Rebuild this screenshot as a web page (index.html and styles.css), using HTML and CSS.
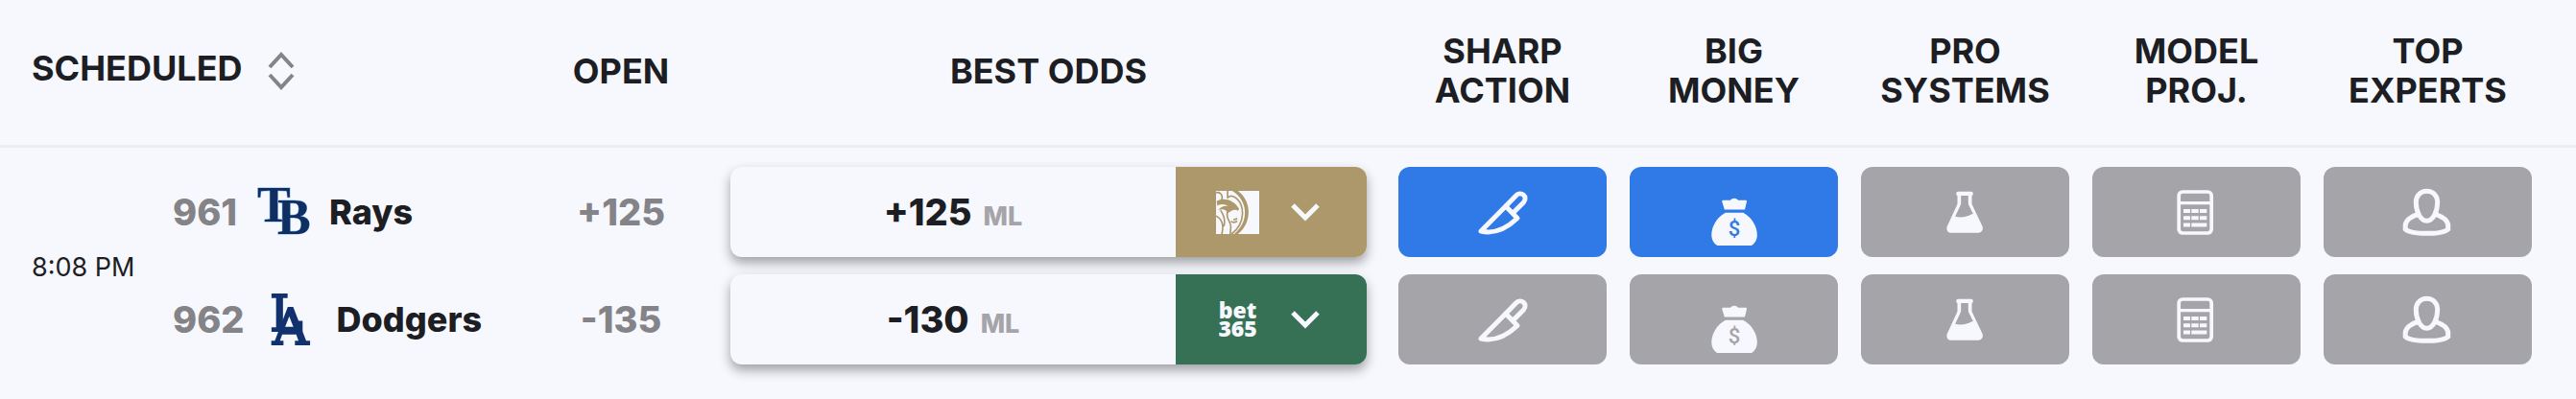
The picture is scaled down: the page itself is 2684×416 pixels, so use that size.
FILE: index.html
```html
<!DOCTYPE html>
<html lang="en">
<head>
    <meta charset="UTF-8">
    <meta name="viewport" content="width=device-width, initial-scale=1.0">
    <title>MLB Odds</title>
    <link rel="stylesheet" href="styles.css">
</head>
<body>
    <!-- icon set shared by both rows -->
    <svg class="sprite" aria-hidden="true">
        <symbol id="knife" viewBox="0 0 56 72">
            <g fill="none" stroke="currentColor" stroke-width="5" stroke-linejoin="round" stroke-linecap="round">
                <path d="M30.8 30L41.5 19C46.5 13.5 54.5 20 49.5 26L39 36.5"/>
                <path d="M30.8 30L43 42.5C31 54 18 59 5 56Z"/>
            </g>
        </symbol>
        <symbol id="money" viewBox="0 0 56 72">
            <path fill="currentColor" d="M16.5 23.7H24C25.5 21 30.5 21 32 23.7H39.8Q41.3 23.7 41 25L39 33.5H17.8L15.2 25Q15.2 23.7 16.5 23.7Z"/>
            <path fill="currentColor" d="M18.7 36.7H37.3C47 42 52 52 51.8 60C52 65 49 69 46 71H10.3C7 69 4.3 65 4.3 60C4.3 52 9 42 18.7 36.7Z"/>
            <text class="dollar" x="28" y="61" text-anchor="middle">$</text>
        </symbol>
        <symbol id="flask" viewBox="0 0 56 72">
            <path fill="currentColor" fill-rule="evenodd" d="M20 14.7H34C36.3 14.7 36.3 19 34.5 19V27.7L45.3 50.5C47 54 45 57.7 41.5 57.7H12.7C9.2 57.7 7.3 54 9 50.5L19.5 27.7V19C17.7 19 17.7 14.7 20 14.7ZM23.2 19V27.7L17.2 40.7C27 43 32 39 35.8 38L30.8 27.7V19Z"/>
        </symbol>
        <symbol id="calculator" viewBox="0 0 56 72">
            <rect x="9.2" y="15" width="34" height="43" rx="4" fill="none" stroke="currentColor" stroke-width="3.7"/>
            <path fill="none" stroke="currentColor" stroke-width="3.3" d="M9 26.7H43"/>
            <path fill="none" stroke="currentColor" stroke-width="4" d="M14 35H21M22.3 35H29.7M31 35H38.3M14 42.3H21M22.3 42.3H29.7M31 42.3H38.3M14 49.5H21M22.3 49.5H38.3"/>
        </symbol>
        <symbol id="expert" viewBox="0 0 56 72">
            <g fill="none" stroke="currentColor" stroke-width="5">
                <path d="M26.5 14.2C33 14.2 37.7 19 37.7 25.5C37.7 35 33.5 45.2 26.5 45.2C19.5 45.2 15.3 35 15.3 25.5C15.3 19 20 14.2 26.5 14.2Z"/>
                <path d="M17.5 38.5C10 40.5 4.2 45 4.2 50V54C10 59.8 43 59.8 48.7 54V50C48.7 45 43 40.5 35.5 38.5"/>
            </g>
        </symbol>
        <symbol id="chevron" viewBox="0 0 30 20">
            <path fill="none" stroke="currentColor" stroke-width="5" d="M2 3L15 16L28 3"/>
        </symbol>
    </svg>

    <table class="odds-table">
        <colgroup>
            <col class="col-time">
            <col class="col-team">
            <col class="col-open">
            <col class="col-best">
            <col class="col-signal" span="5">
            <col class="col-end">
        </colgroup>
        <thead>
            <tr>
                <th class="scheduled" colspan="2">
                    <button class="sort" type="button">
                        <span class="sort-label">SCHEDULED</span>
                        <svg class="sort-icon" viewBox="0 0 28 40" aria-hidden="true">
                            <path fill="none" stroke="currentColor" stroke-width="4" d="M2 16L14 3L26 16M2 24L14 37L26 24"/>
                        </svg>
                    </button>
                </th>
                <th>OPEN</th>
                <th>BEST ODDS</th>
                <th>SHARP<br>ACTION</th>
                <th>BIG<br>MONEY</th>
                <th>PRO<br>SYSTEMS</th>
                <th>MODEL<br>PROJ.</th>
                <th>TOP<br>EXPERTS</th>
                <th></th>
            </tr>
        </thead>
        <tbody>
            <tr class="away">
                <td class="time" rowspan="2">8:08 PM</td>
                <td>
                    <div class="team">
                        <span class="rotation">961</span>
                        <svg class="team-logo" viewBox="0 0 58 56" aria-hidden="true">
                            <g class="rays">
                                <text x="1" y="38">T</text>
                                <text x="22" y="51">B</text>
                            </g>
                        </svg>
                        <span class="team-name">Rays</span>
                    </div>
                </td>
                <td class="open">+125</td>
                <td>
                    <div class="best">
                        <button class="quote" type="button">+125<span class="market">ML</span></button>
                        <button class="book mgm" type="button" aria-label="BetMGM">
                            <svg class="book-logo" viewBox="0 0 134 134" aria-hidden="true">
                                <path fill="currentColor" d="M0 0H134V134H0Z"/>
                                <g fill="none" stroke="#ad986c" stroke-width="5">
                                    <path d="M36 0V24M0 6C14 2 24 14 16 32"/>
                                    <path d="M38 20C50 6 84 30 82 72C81 98 66 120 48 134"/>
                                    <path d="M0 78C16 84 26 104 18 134M14 60C26 78 30 92 24 110M36 66C28 84 46 94 46 112L44 134"/>
                                    <path d="M46 94C52 99 60 98 66 94M54 90L66 86"/>
                                </g>
                                <path fill="#ad986c" d="M50 0H68C112 32 112 100 68 134H56C104 96 100 30 50 0Z"/>
                                <path fill="#ad986c" d="M2 32C20 20 54 24 72 56L68 62C60 54 44 62 36 70C34 58 18 54 6 60C14 50 24 46 38 46C26 40 14 40 4 46Z"/>
                            </svg>
                            <svg class="chevron"><use href="#chevron"/></svg>
                        </button>
                    </div>
                </td>
                <td><button class="signal active" type="button" aria-label="Sharp action"><svg><use href="#knife"/></svg></button></td>
                <td><button class="signal active" type="button" aria-label="Big money"><svg><use href="#money"/></svg></button></td>
                <td><button class="signal" type="button" aria-label="Pro systems"><svg><use href="#flask"/></svg></button></td>
                <td><button class="signal" type="button" aria-label="Model projection"><svg><use href="#calculator"/></svg></button></td>
                <td><button class="signal" type="button" aria-label="Top experts"><svg><use href="#expert"/></svg></button></td>
                <td></td>
            </tr>
            <tr class="home">
                <td>
                    <div class="team">
                        <span class="rotation">962</span>
                        <svg class="team-logo" viewBox="0 0 58 56" aria-hidden="true">
                            <g class="dodgers">
                                <text x="6" y="40">L</text>
                                <text x="9" y="54">A</text>
                            </g>
                        </svg>
                        <span class="team-name">Dodgers</span>
                    </div>
                </td>
                <td class="open">-135</td>
                <td>
                    <div class="best">
                        <button class="quote" type="button">-130<span class="market">ML</span></button>
                        <button class="book bet365" type="button">
                            <span class="book-logo">bet<br>365</span>
                            <svg class="chevron"><use href="#chevron"/></svg>
                        </button>
                    </div>
                </td>
                <td><button class="signal" type="button" aria-label="Sharp action"><svg><use href="#knife"/></svg></button></td>
                <td><button class="signal" type="button" aria-label="Big money"><svg><use href="#money"/></svg></button></td>
                <td><button class="signal" type="button" aria-label="Pro systems"><svg><use href="#flask"/></svg></button></td>
                <td><button class="signal" type="button" aria-label="Model projection"><svg><use href="#calculator"/></svg></button></td>
                <td><button class="signal" type="button" aria-label="Top experts"><svg><use href="#expert"/></svg></button></td>
                <td></td>
            </tr>
        </tbody>
    </table>
</body>
</html>
```
FILE: styles.css
```css
body {
    margin: 0;
    background: #f7f8fd;
    color: #1d1e23;
    font-family: Inter, "Liberation Sans", sans-serif;
    font-size: 36px;
    line-height: 41px;
}

button {
    margin: 0;
    padding: 0;
    border: none;
    background: none;
    color: inherit;
    font: inherit;
    cursor: pointer;
}

.sprite {
    display: none;
}

.odds-table {
    width: 100%;
    table-layout: fixed;
    border-collapse: separate;
    border-spacing: 0;
}

.col-time {
    width: 180px;
}

.col-open {
    width: 186px;
}

.col-best {
    width: 705px;
}

.col-signal {
    width: 241px;
}

.col-end {
    width: 34px;
}

th {
    padding: 33px 0 36px;
    border-bottom: 3px solid #ecedf2;
    font-weight: 700;
    text-align: center;
}

.scheduled {
    padding-left: 33px;
    text-align: left;
}

.sort {
    display: flex;
    align-items: center;
    gap: 26px;
}

.sort-label {
    padding-bottom: 6px;
}

.sort-icon {
    width: 28px;
    height: 40px;
    color: #838388;
}

td {
    padding: 0;
    text-align: center;
    vertical-align: middle;
}

.away td {
    padding-top: 20px;
    padding-bottom: 9px;
}

.home td {
    padding-top: 9px;
    padding-bottom: 20px;
}

.away .time {
    padding: 20px 0 18px 33px;
    font-size: 27px;
    text-align: left;
}

.team {
    display: flex;
    align-items: center;
}

.rotation,
.open {
    color: #838388;
    font-size: 38px;
    font-weight: 800;
}

.team-logo {
    width: 58px;
    height: 56px;
    margin: 0 18px 0 20px;
    overflow: visible;
}

.rays {
    fill: #0f2f62;
    stroke: #8fbce6;
    stroke-width: 1px;
    paint-order: stroke;
    font-family: "Liberation Serif", serif;
    font-size: 52px;
    font-weight: 700;
}

.dodgers {
    fill: #12316f;
    stroke: #12316f;
    stroke-width: 2px;
    font-family: "DejaVu Serif", serif;
    font-size: 52px;
}

.team-name {
    font-weight: 800;
}

.best {
    display: flex;
    height: 94px;
    margin: 0 21px;
    border-radius: 12px;
    background: #f7f8fd;
    box-shadow: 0 6px 12px rgba(29, 30, 35, 0.4);
    overflow: hidden;
}

.quote {
    flex: 1;
    font-size: 38px;
    font-weight: 800;
}

.market {
    margin-left: 12px;
    color: #a5a4a9;
    font-size: 27px;
    font-weight: 800;
    line-height: 1;
}

.book {
    display: flex;
    flex: 0 0 30%;
    box-sizing: border-box;
    align-items: center;
    gap: 33px;
    padding-left: 42px;
    color: #f7f8fd;
}

.mgm {
    background: #ad986c;
}

.bet365 {
    background: #367156;
}

.book-logo {
    width: 45px;
    height: 45px;
}

.bet365 .book-logo {
    height: auto;
    font-family: "Open Sans", sans-serif;
    font-size: 23px;
    font-weight: 800;
    line-height: 19px;
}

.chevron {
    width: 30px;
    height: 20px;
}

.signal {
    display: flex;
    width: calc(100% - 24px);
    height: 94px;
    margin: 0 12px;
    align-items: center;
    justify-content: center;
    border-radius: 12px;
    background: #a5a4a9;
    color: #f7f8fd;
    --mark: #a5a4a9;
}

.signal.active {
    background: #307ae8;
    --mark: #307ae8;
}

.signal svg {
    width: 56px;
    height: 72px;
}

.dollar {
    fill: var(--mark);
    font-family: Roboto, sans-serif;
    font-size: 22px;
    font-weight: 500;
}
```
